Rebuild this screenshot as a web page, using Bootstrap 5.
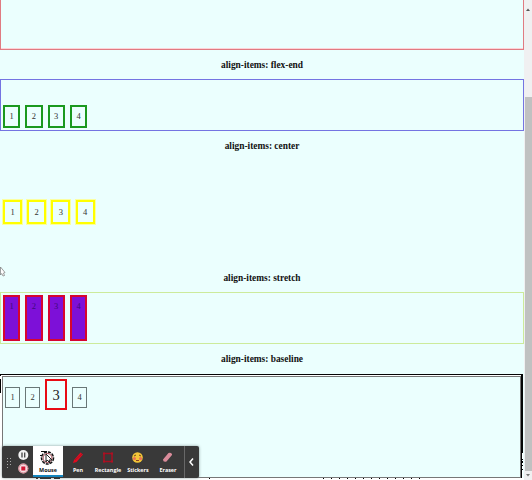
<!DOCTYPE html>
<html lang="en">
<head>
<meta charset="utf-8">
<title>align-items</title>
<link href="https://cdn.jsdelivr.net/npm/bootstrap@5.3.0/dist/css/bootstrap.min.css" rel="stylesheet">
<style>
html,body{height:480px;overflow:hidden}
body{background:#ebfffe;font-family:"Liberation Serif","Times New Roman",serif;color:#111;line-height:1}
.page-main{width:524px;height:480px}
.demo{border:1px solid;padding:2px;gap:5px}
.title{font-size:9.4px;font-weight:700;height:29px;line-height:31px;margin:0}
.title.last{height:30px}
.cell{width:17.3px;height:23px;font-size:8.5px;line-height:19px;border:2px solid;text-align:center;color:#222;flex:none}
.cell span{color:#333}
.demo-red{height:50px;border-color:#e07b82;border-top:0;box-shadow:inset 0 -1px #fdd3d8}
.demo-blue{height:52px;border-color:#7474e2}
.demo-blue .cell{border-color:#1a991f}
.demo-center{height:103px;padding:1px 3px 0;gap:5.2px}
.demo-center .cell{width:19px;height:24px;border:2px solid #ff0;outline:1px solid #fbffa0;outline-offset:-.5px;line-height:20px}
.demo-green{height:52px;border-color:#cceb9b}
.demo-green .cell{height:auto;border-color:#d7052f;background:#7d10d8;line-height:18px}
.demo-green .cell span{color:#3d0a7d}
.demo-base{height:105px;border:1px solid #050505;border-right-width:2px;border-bottom-color:#fff;background:#fff;padding:1px 0 0 1px;margin-right:1px}
.base-inner{border:1px solid #777;background:#ebfffe;gap:5px;padding:2px;height:102px}
.base-inner .cell{width:15px;height:21px;border:1px solid #697777;line-height:18px}
.base-inner .cell.big{width:22px;height:31px;font-size:14.5px;line-height:28px;border:2px solid #e80b14}
.sbar{width:8px;background:#f0f0f1;padding-left:1px}
.sbar .top{height:97px}
.sbar .thumb{height:374px;background:#c0c1c1}
.tools{left:2px;top:446px;width:197px;height:32px;background:#393939;border-radius:2px;box-shadow:0 0 3px #899;color:#fff;font:700 5.4px "Open Sans","Noto Sans",sans-serif}
.grip{width:15px}.ctl{width:13px}
.tool{width:30px;height:30px;padding-top:4px}
.tool svg{display:block}
.tool span{line-height:7px;margin-top:1px}
.tool.active{height:31px;background:#fff;color:#111;border-bottom:2px solid #1585bd;margin-left:3px}
.chev{width:15px;height:32px;border-left:1px solid #686868;margin-left:1px}
.pointer{left:0;top:266px}
.edge{left:0;top:376px}
.ticks{left:0;top:477px}
.right-dots{left:521px;top:453px}
</style>
<script src="https://cdn.jsdelivr.net/npm/bootstrap@5.3.0/dist/js/bootstrap.bundle.min.js"></script>
</head>
<body class="position-relative">
<div class="d-flex">
<main class="page-main">
<div class="demo demo-red"></div>
<h2 class="title text-center">align-items: flex-end</h2>
<div class="demo demo-blue d-flex align-items-end"><div class="cell"><span>1</span></div><div class="cell"><span>2</span></div><div class="cell"><span>3</span></div><div class="cell"><span>4</span></div></div>
<h2 class="title text-center">align-items: center</h2>
<div class="demo-center d-flex align-items-center"><div class="cell"><span>1</span></div><div class="cell"><span>2</span></div><div class="cell"><span>3</span></div><div class="cell"><span>4</span></div></div>
<h2 class="title text-center">align-items: stretch</h2>
<div class="demo demo-green d-flex align-items-stretch"><div class="cell"><span>1</span></div><div class="cell"><span>2</span></div><div class="cell"><span>3</span></div><div class="cell"><span>4</span></div></div>
<h2 class="title last text-center">align-items: baseline</h2>
<div class="demo-base"><div class="base-inner d-flex align-items-baseline"><div class="cell"><span>1</span></div><div class="cell"><span>2</span></div><div class="cell big">3</div><div class="cell"><span>4</span></div></div></div>
</main>
<aside class="sbar"><div class="top"><svg width="7" height="8"><path d="M1 6L3 3.5L5 6Z" fill="#555"/></svg></div><div class="thumb"></div><svg class="d-block" width="7" height="9"><path d="M1 3H5L3 5.500Z" fill="#777"/></svg></aside>
</div>
<svg class="edge position-absolute" width="2" height="102"><path d="M0 3H1V17H0Z" fill="#000"/><path d="M0 0H2V3H0ZM0 17H1V102H0Z" fill="#fff"/></svg>
<svg class="right-dots position-absolute" width="2" height="25"><path d="M1 0H2V25H1Z" fill="#fff"/><path d="M1 6h1v1H1zM1 8h1v2H1zM1 12h1v1H1zM1 16h1v1H1z"/></svg>
<svg class="ticks position-absolute" width="524" height="3"><path d="M0 1H524V3H0Z" fill="#fff"/><path d="M2 .5H521" stroke="#777"/><path d="M323 1.500H422" stroke="#000" stroke-dasharray="1 7"/><path d="M209 1.500H210M36 1.500H38M40 1.500H51M54 1.500H60" stroke="#000"/></svg>
<svg class="pointer position-absolute" width="7" height="12"><path d="M.5 1L5 6.500L3.500 7L4.500 9.500L3 10L1.700 7.500L.5 9Z" fill="#fff" stroke="#777" stroke-width=".7"/></svg>
<div class="tools position-absolute d-flex align-items-start">
<div class="grip"><svg width="15" height="32" fill="#aaa"><path d="M5 12h1v1H5zM8 12h1v1H8zM5 15h1v1H5zM8 15h1v1H8zM5 18h1v1H5zM8 18h1v1H8zM5 21h1v1H5z"/></svg></div>
<div class="ctl"><svg width="13" height="32"><circle cx="6.300" cy="9" r="5" fill="#f4f4f4"/><path d="M5 6.500v5M7.700 6.500v5" stroke="#444" stroke-width="1.300"/><circle cx="6.300" cy="22.500" r="5" fill="#f3dce0"/><path d="M4.300 20.500h4v4h-4z" fill="#d31532"/><circle cx="6.300" cy="22.500" r="4.500" fill="none" stroke="#cc7b87"/></svg></div>
<div class="tool active d-flex flex-column align-items-center"><svg width="20" height="16" viewBox="0 0 20 16"><circle cx="9.500" cy="8" r="6" fill="#fff" stroke="#111" stroke-width="1.500" stroke-dasharray="3 1"/><circle cx="9.500" cy="8" r="4.500" fill="none" stroke="#9a3c48"/><path d="M8 4L14 10L11 10L12 13L9 10L8 12Z" fill="#fff" stroke="#222"/><path d="M3 1h6v1H3zM2 5h2v1H2z" fill="#111"/></svg><span>Mouse</span></div>
<div class="tool d-flex flex-column align-items-center"><svg width="16" height="16"><path d="M4 10L10.500 2.500L13 4.500L6.500 12L3 13Z" fill="#e00b20"/><path d="M5 10L12 4" stroke="#8d1721" stroke-width=".6"/></svg><span>Pen</span></div>
<div class="tool d-flex flex-column align-items-center"><svg width="16" height="16"><rect x="4" y="3.500" width="8" height="8" fill="none" stroke="#a50f20" stroke-width="1.500"/><path d="M3 2.500h2v2H3zM11 2.500h2v2h-2zM3 10.500h2v2H3zM11 10.500h2v2h-2z" fill="#ad1023"/></svg><span>Rectangle</span></div>
<div class="tool d-flex flex-column align-items-center"><svg width="16" height="16"><circle cx="7.500" cy="7.500" r="5.300" fill="#f3c538"/><path d="M4 6l2-1M9 5l2 1" stroke="#6e4b19"/><circle cx="4.500" cy="8.500" r="1.500" fill="#ec7057"/><circle cx="10.500" cy="8.500" r="1.500" fill="#ec7057"/><path d="M6 10.500h3" stroke="#8d4321"/></svg><span>Stickers</span></div>
<div class="tool d-flex flex-column align-items-center"><svg width="16" height="16"><path d="M3 9.500L8.500 3Q10.500 2 12 4L12 5L6.500 11.500Q3 12.500 3 9.500Z" fill="#d98b9a"/></svg><span>Eraser</span></div>
<div class="chev"><svg width="14" height="32"><path d="M8 12.500L5 16L8 19.500" fill="none" stroke="#fff" stroke-width="1.500"/></svg></div>
</div>
</body>
</html>
